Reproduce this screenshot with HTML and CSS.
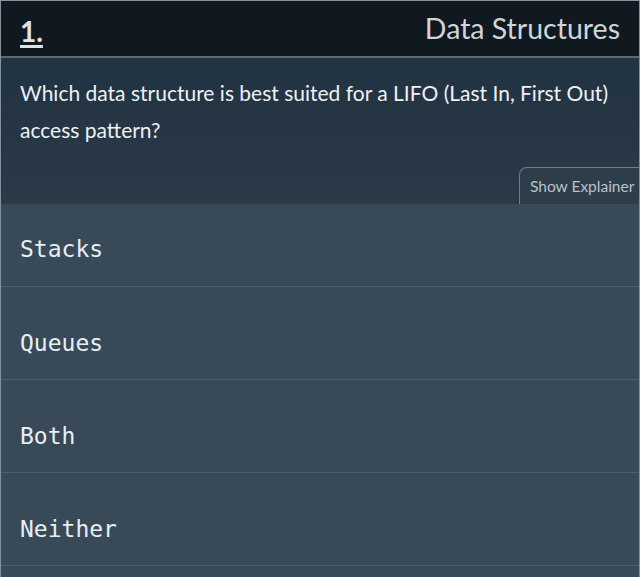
FILE: index.html
```html
<!DOCTYPE html>
<html lang="en">
<head>
<meta charset="utf-8">
<title>Quiz</title>
<link rel="stylesheet" href="styles.css">
</head>
<body>
<div class="quiz">
  <header class="quiz-header">
    <span class="num">1.</span>
    <span class="topic">Data Structures</span>
  </header>
  <section class="question">
    <p class="question-text">Which data structure is best suited for a LIFO (Last In, First Out) access pattern?</p>
    <div class="explainer-row">
      <button class="explainer">Show Explainer</button>
    </div>
  </section>
  <ul class="options">
    <li class="option option-first">Stacks</li>
    <li class="option">Queues</li>
    <li class="option">Both</li>
    <li class="option">Neither</li>
    <li class="option option-tail"></li>
  </ul>
</div>
</body>
</html>
```
FILE: styles.css
```css
html, body {
  margin: 0;
  padding: 0;
  background: #384a58;
}
.quiz {
  width: 640px;
  height: 577px;
  box-sizing: border-box;
  border: 1px solid #85919a;
  border-bottom: none;
  overflow: hidden;
  display: flex;
  flex-direction: column;
  font-family: Lato, "Open Sans", sans-serif;
}
.quiz-header {
  height: 55px;
  flex: none;
  background: #111920;
  border-bottom: 2px solid #5d6872;
  display: flex;
  align-items: center;
  justify-content: space-between;
  padding: 0 19px 0 19px;
}
.num {
  font-size: 28px;
  font-weight: 700;
  color: #dfe3e6;
  text-decoration: underline;
  text-underline-offset: 3px;
  text-decoration-thickness: 3px;
  margin-top: 4px;
}
.topic {
  font-size: 28.5px;
  font-weight: 400;
  color: #cfd5d9;
  margin-top: -2px;
}
.question {
  flex: none;
  height: 146px;
  background: linear-gradient(#213242, #2a3a47);
  display: flex;
  flex-direction: column;
  justify-content: space-between;
}
.question-text {
  margin: 0;
  padding: 16px 19px 0 19px;
  font-size: 21px;
  line-height: 37px;
  color: #eef1f3;
}
.explainer-row {
  display: flex;
  justify-content: flex-end;
}
.explainer {
  height: 37px;
  width: 120px;
  box-sizing: border-box;
  background: #2d3d4a;
  border: 1px solid #6f7d88;
  border-right: none;
  border-bottom: none;
  border-radius: 8px 0 0 0;
  font-family: Lato, "Open Sans", sans-serif;
  font-size: 15.5px;
  color: #b9c2c8;
  padding: 0 0 0 10px;
  text-align: left;
  white-space: nowrap;
}
.options {
  list-style: none;
  margin: 0;
  padding: 0;
  background: #384a58;
}
.option {
  padding: 43px 19px 0 19px;
  height: 49px;
  border-bottom: 1px solid #4b5e6c;
  font-family: "DejaVu Sans Mono", monospace;
  font-size: 23px;
  line-height: 27px;
  color: #e8eff3;
}
.option-first {
  padding-top: 32px;
  height: 50px;
}
.option-tail {
  height: 20px;
  padding-top: 0;
  border-bottom: none;
}
```
